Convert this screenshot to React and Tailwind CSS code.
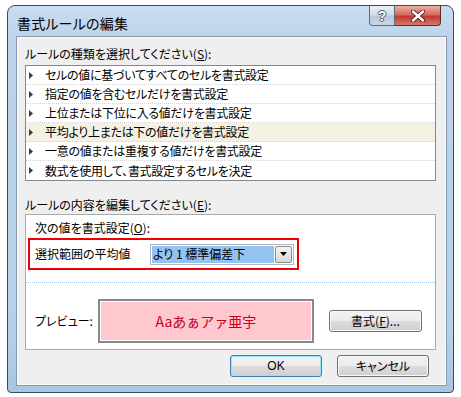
export default function App() {
  const rules = [
    "セルの値に基づいてすべてのセルを書式設定",
    "指定の値を含むセルだけを書式設定",
    "上位または下位に入る値だけを書式設定",
    "平均より上または下の値だけを書式設定",
    "一意の値または重複する値だけを書式設定",
    "数式を使用して、書式設定するセルを決定",
  ];
  const btn =
    "flex items-center justify-center rounded-[3px] border bg-[linear-gradient(to_bottom,#f2f2f2_0%,#ebebeb_48%,#dddddd_52%,#cfcfcf_100%)]";
  return (
    <div className="w-[461px] h-[397px] bg-white pt-[5px] pl-[7px] font-['Noto_Sans_CJK_JP','Noto_Sans',sans-serif] text-[12px] leading-[16px] text-black [font-feature-settings:'palt']">
      <div className="w-[447px] h-[388px] rounded-t-[8px] rounded-b-[4px] border border-[#3f4b5a] bg-[linear-gradient(to_bottom,#c9dcf0_0%,#bbd2ea_10%,#b7cfe8_85%,#a6c6e2_100%)] flex flex-col pl-[9px] pr-[7px] pb-[7px]">
        {/* title bar */}
        <div className="h-[31px] flex items-start">
          <div className="mt-[8px] text-[14px] leading-[18px] text-black tracking-[0.2px]">書式ルールの編集</div>
          <div className="ml-auto mr-[5px] flex">
            <div className="w-[26px] h-[20px] border border-t-0 border-[#5d6b7c] rounded-bl-[4px] bg-[linear-gradient(to_bottom,#e9eff6_0%,#d3dee9_45%,#b9c9da_55%,#c9d6e4_100%)] flex items-center justify-center">
              <span className="font-['Liberation_Sans',sans-serif] font-bold text-[14px] leading-[14px] text-white [text-shadow:1px_0_0_#4a5a6c,-1px_0_0_#4a5a6c,0_1px_0_#4a5a6c,0_-1px_0_#4a5a6c]">?</span>
            </div>
            <div className="w-[46px] h-[20px] border border-t-0 border-l-0 border-[#5b2b2b] rounded-br-[4px] bg-[linear-gradient(to_bottom,#eab1a7_0%,#d66a5e_45%,#c2392f_55%,#d8786b_100%)] flex items-center justify-center">
              <svg width="14" height="12" viewBox="0 0 14 12">
                <path d="M2 1.5 L12 10.5 M12 1.5 L2 10.5" stroke="#4a1a18" strokeWidth="4.2" strokeLinecap="round" />
                <path d="M2 1.5 L12 10.5 M12 1.5 L2 10.5" stroke="#ffffff" strokeWidth="2.4" strokeLinecap="round" />
              </svg>
            </div>
          </div>
        </div>

        {/* content */}
        <div className="flex-1 flex flex-col bg-[#efefef] border border-[#fbfbfb] shadow-[0_0_0_1px_#8598ae]">
          <div className="mt-[8px] ml-[7px]">
            ルールの種類を選択してください(<u>S</u>):
          </div>
          <div className="mt-[3px] ml-[7px] w-[411px] border border-[#828790] bg-white">
            {rules.map((r, i) => (
              <div
                key={i}
                className={
                  "h-[19px] flex items-center pl-[3px] " +
                  (i < rules.length - 1 ? "border-b border-dotted border-[#d4d4d4] " : "") +
                  (i === 3 ? "bg-[#f4f1e3]" : "")
                }
              >
                <svg width="4" height="7" viewBox="0 0 4 7" className="shrink-0">
                  <polygon points="0,0 4,3.5 0,7" fill="#3a3a3a" />
                </svg>
                <span className="ml-[12px] tracking-[-0.3px]">{r}</span>
              </div>
            ))}
          </div>

          <div className="mt-[16px] ml-[7px]">
            ルールの内容を編集してください(<u>E</u>):
          </div>
          <div className="mt-[1px] ml-[7px] w-[411px] h-[136px] border border-[#a9a9a9] bg-white flex flex-col">
            <div className="mt-[5px] ml-[9px]">
              次の値を書式設定(<u>O</u>):
            </div>
            <div className="mt-[2px] ml-[2px] w-[271px] h-[32px] border-2 border-[#f00000] flex items-center pl-[5px] pr-[3px]">
              <span>選択範囲の平均値</span>
              <div className="ml-auto w-[144px] h-[21px] border border-[#b3b7bd] bg-white flex items-stretch p-[1px] gap-[1px]">
                <div className="flex-1 bg-[#93c3f0] flex items-center pl-[1px] leading-[14px]">より 1 標準偏差下</div>
                <div className="w-[17px] border border-[#8b8b8b] rounded-[2px] bg-[linear-gradient(to_bottom,#f3f3f3_0%,#e6e6e6_50%,#d6d6d6_100%)] flex items-center justify-center">
                  <svg width="7" height="4" viewBox="0 0 7 4">
                    <polygon points="0,0 7,0 3.5,4" fill="#000" />
                  </svg>
                </div>
              </div>
            </div>
            <div className="mt-[12px] border-t border-dotted border-[#9dc4ea]" />
            <div className="mt-[16px] flex items-center pl-[9px]">
              <span className="w-[63px]">プレビュー:</span>
              <div className="w-[216px] h-[44px] border-2 border-[#8a8a8a] shadow-[inset_0_0_0_1px_#ffffff] bg-[#ffc7ce] flex items-center justify-center">
                <span className="text-[14px] leading-[18px] text-[#c8001c] [font-feature-settings:normal]">Aaあぁアァ亜宇</span>
              </div>
              <div className={btn + " ml-[15px] w-[93px] h-[22px] border-[#707070] shadow-[inset_0_0_0_1px_#fafafa]"}>
                書式(<u>F</u>)...
              </div>
            </div>
          </div>

          <div className="mt-[5px] flex justify-end pr-[16px] gap-[15px]">
            <div className={btn + " w-[92px] h-[22px] border-[#3c7fb1] shadow-[inset_0_0_0_1px_#94e2fb]"}>
              <span className="font-['Liberation_Sans',sans-serif]">OK</span>
            </div>
            <div className={btn + " w-[92px] h-[22px] border-[#707070] shadow-[inset_0_0_0_1px_#fafafa]"}>
              キャンセル
            </div>
          </div>
        </div>
      </div>
    </div>
  );
}
